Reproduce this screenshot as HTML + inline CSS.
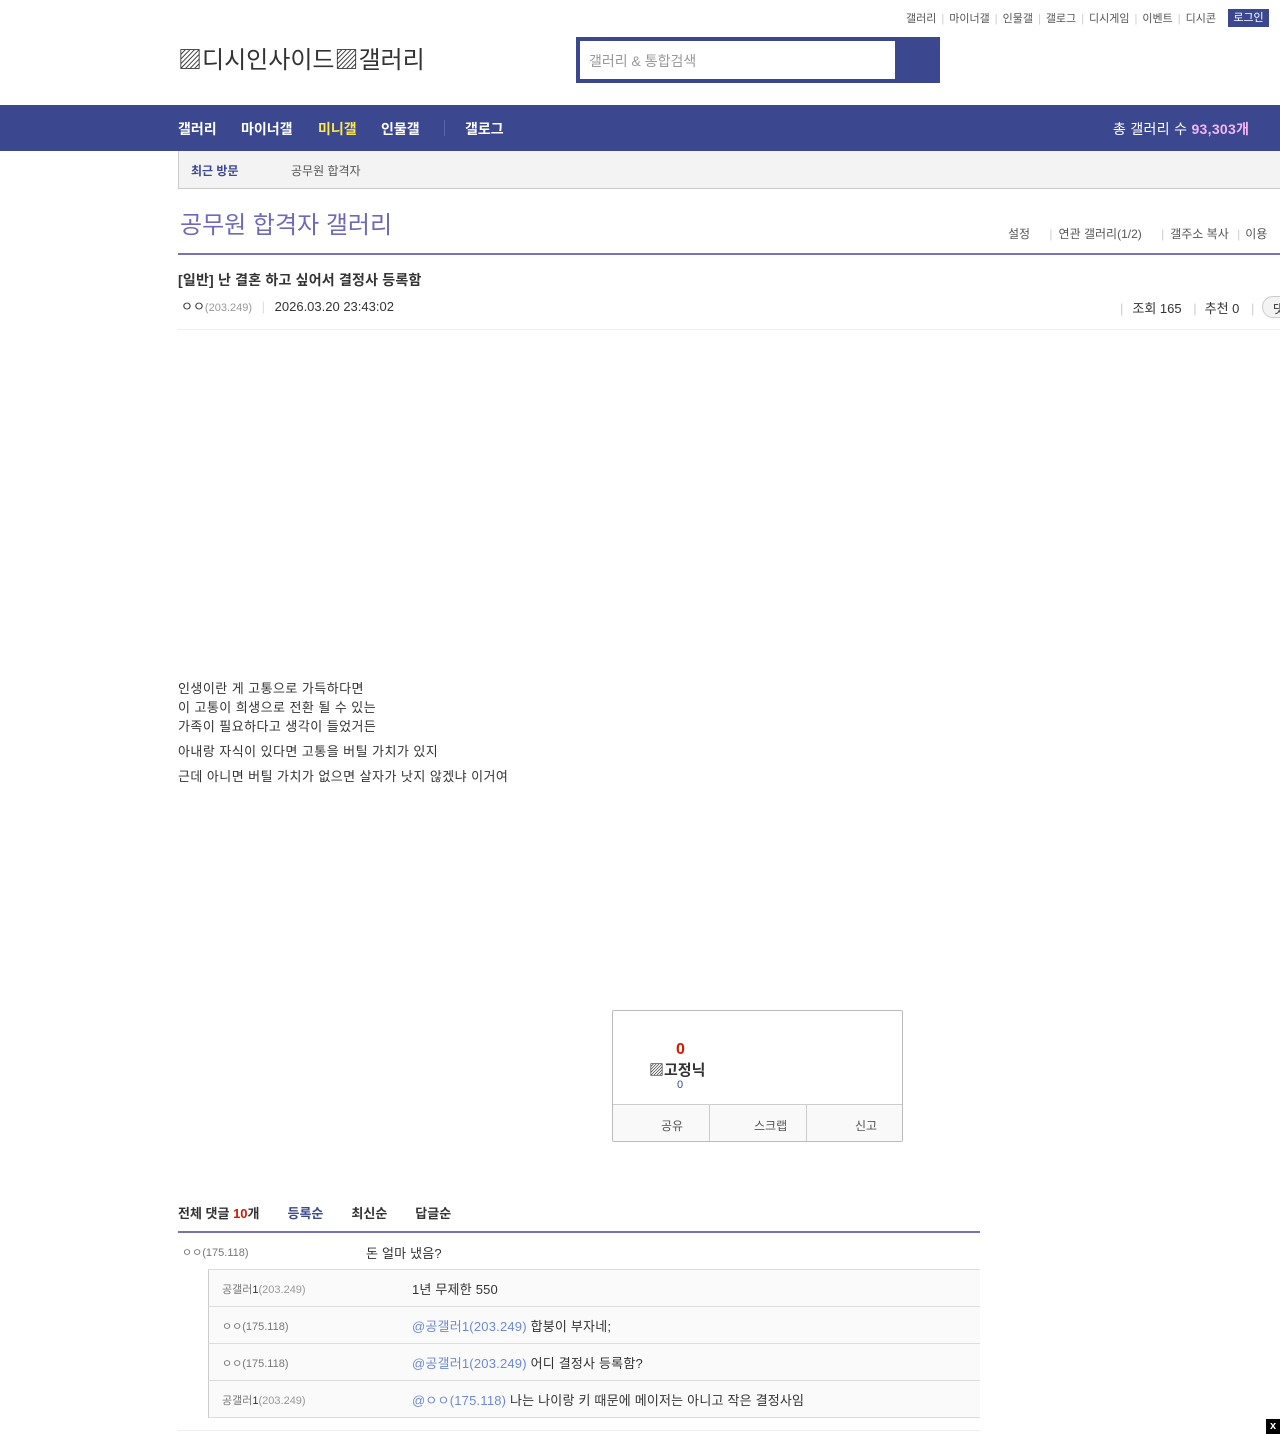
<!DOCTYPE html>
<html><head><meta charset="utf-8"><style>
*{margin:0;padding:0;box-sizing:border-box}
body{width:1280px;height:1434px;position:relative;overflow:hidden;background:#fff;font-family:"Liberation Sans","Noto Sans CJK KR",sans-serif;color:#333}
.a{position:absolute;white-space:nowrap}
.top{font-size:11px;color:#555;top:10px;right:64px}
.top span.s{color:#ccc;margin:0 5px}
.nav{top:105px;left:0;width:1280px;height:46px;background:#3b4890}
.nav .a{font-size:14px;font-weight:bold;color:#fff;top:14px}
.sub{top:151px;left:178px;width:1102px;height:38px;background:#f3f3f3;border-left:1px solid #ccc;border-bottom:1px solid #ccc}
.body{font-size:13px;color:#333;letter-spacing:0.45px}
.rbox{top:1010px;left:612px;width:291px;height:132px;border:1px solid #bbb;border-radius:2px}
.cm{left:208px;width:772px;height:37px;border-top:1px solid #ddd;background:#fafafa;border-left:1px solid #ccc}
.cm .n{position:absolute;left:13px;top:11px;font-size:11px;color:#777}
.cm .t{position:absolute;left:203px;top:9px;font-size:13px;color:#333;letter-spacing:0.2px}
.ip{color:#999;font-size:11px}
.at{color:#6e8ad6}
</style></head><body>
<div class="a top">갤러리<span class="s">|</span>마이너갤<span class="s">|</span>인물갤<span class="s">|</span>갤로그<span class="s">|</span>디시게임<span class="s">|</span>이벤트<span class="s">|</span>디시콘</div>
<div class="a" style="top:9px;left:1228px;width:41px;height:18px;background:#3b4890;color:#fff;font-size:11px;text-align:center;line-height:18px">로그인</div>
<div class="a" style="top:40px;left:178px;font-size:24px;color:#333">▨디시인사이드▨갤러리</div>
<div class="a" style="top:37px;left:576px;width:364px;height:46px;background:#3b4890"></div>
<div class="a" style="top:41px;left:580px;width:315px;height:38px;background:#fff;font-size:14px;color:#999;padding:10px 9px">갤러리 &amp; 통합검색</div>
<div class="a nav">
<span class="a" style="left:178px">갤러리</span><span class="a" style="left:241px">마이너갤</span><span class="a" style="left:318px;color:#ffe84a">미니갤</span><span class="a" style="left:381px">인물갤</span><span class="a" style="left:444px;top:15px;width:1px;height:16px;background:#5a67a5"></span><span class="a" style="left:465px">갤로그</span>
<span class="a" style="left:1113px;font-weight:normal;letter-spacing:0.3px">총 갤러리 수 <b style="color:#f6b5f2">93,303개</b></span></div>
<div class="a sub"><span class="a" style="left:12px;top:11px;font-size:12px;font-weight:bold;color:#3b4890">최근 방문</span><span class="a" style="left:112px;top:11px;font-size:12px;color:#555">공무원 합격자</span></div>
<div class="a" style="top:205px;left:180px;font-size:24px;color:#6e6ab8">공무원 합격자 갤러리</div>
<div class="a" style="top:225px;left:1008px;font-size:12px;color:#555">설정 <span style="color:#ccc;margin:0 6px 0 16px">|</span>연관 갤러리(1/2) <span style="color:#ccc;margin:0 6px 0 16px">|</span>갤주소 복사 <span style="color:#ccc;margin:0 5px">|</span>이용</div>
<div class="a" style="top:253px;left:178px;width:1102px;height:2px;background:#7873b5"></div>
<div class="a" style="top:270px;left:178px;font-size:14px;font-weight:bold;color:#333;letter-spacing:0.2px">[일반] 난 결혼 하고 싶어서 결정사 등록함</div>
<div class="a" style="top:296px;left:181px;font-size:13px;color:#333">ㅇㅇ<span class="ip">(203.249)</span> <span style="color:#ddd;margin:0 6px">|</span> 2026.03.20 23:43:02</div>
<div class="a" style="top:298px;left:1120px;font-size:13px;color:#333"><span style="color:#ccc;margin-right:9px">|</span>조회 165 <span style="color:#ccc;margin:0 8px">|</span>추천 0 <span style="color:#ccc;margin-left:8px">|</span></div>
<div class="a" style="top:296px;left:1262px;width:30px;height:22px;border:1px solid #ccc;border-radius:11px;background:#f3f3f3;font-size:12px;padding:3px 10px">댓</div>
<div class="a" style="top:329px;left:178px;width:1102px;height:1px;background:#eee"></div>
<div class="a body" style="top:679px;left:178px;line-height:19px">인생이란 게 고통으로 가득하다면<br>이 고통이 희생으로 전환 될 수 있는<br>가족이 필요하다고 생각이 들었거든</div>
<div class="a body" style="top:741px;left:178px">아내랑 자식이 있다면 고통을 버틸 가치가 있지</div>
<div class="a body" style="top:766px;left:178px">근데 아니면 버틸 가치가 없으면 살자가 낫지 않겠냐 이거여</div>
<div class="a rbox">
<div class="a" style="left:63px;top:30px;font-size:16px;font-weight:bold;color:#d31900">0</div>
<div class="a" style="left:36px;top:48px;font-size:15px;font-weight:bold;color:#333">▨고정닉</div>
<div class="a" style="left:64px;top:68px;font-size:11px;color:#3b4890">0</div>
<div class="a" style="left:0;top:93px;width:289px;height:37px;background:#f9f9f9;border-top:1px solid #ccc"></div>
<div class="a" style="left:96px;top:93px;width:1px;height:37px;background:#ccc"></div>
<div class="a" style="left:193px;top:93px;width:1px;height:37px;background:#ccc"></div>
<div class="a" style="left:48px;top:106px;font-size:12px;color:#555">공유</div>
<div class="a" style="left:141px;top:106px;font-size:12px;color:#555">스크랩</div>
<div class="a" style="left:242px;top:106px;font-size:12px;color:#555">신고</div>
</div>
<div class="a" style="top:1203px;left:178px;font-size:13px;font-weight:bold;color:#333">전체 댓글 <span style="color:#d31900">10</span>개<span style="color:#3b4890;margin-left:28px">등록순</span><span style="margin-left:28px">최신순</span><span style="margin-left:28px">답글순</span></div>
<div class="a" style="top:1231px;left:178px;width:802px;height:2px;background:#7873b5"></div>
<div class="a" style="top:1244px;left:182px;font-size:11px;color:#777">ㅇㅇ<span>(175.118)</span></div>
<div class="a body" style="top:1243px;left:366px;letter-spacing:0.2px">돈 얼마 냈음?</div>
<div class="a cm" style="top:1269px"><span class="n">공갤러<b style="color:#333;font-weight:normal">1</b><span class="ip">(203.249)</span></span><span class="t">1년 무제한 550</span></div>
<div class="a cm" style="top:1306px"><span class="n">ㅇㅇ(175.118)</span><span class="t"><span class="at">@공갤러1(203.249)</span> 합붕이 부자네;</span></div>
<div class="a cm" style="top:1343px"><span class="n">ㅇㅇ(175.118)</span><span class="t"><span class="at">@공갤러1(203.249)</span> 어디 결정사 등록함?</span></div>
<div class="a cm" style="top:1380px;border-bottom:1px solid #ddd;height:38px"><span class="n">공갤러<b style="color:#333;font-weight:normal">1</b><span class="ip">(203.249)</span></span><span class="t"><span class="at">@ㅇㅇ(175.118)</span> 나는 나이랑 키 때문에 메이저는 아니고 작은 결정사임</span></div>
<div class="a" style="top:1430px;left:178px;width:802px;height:1px;background:#eee"></div>
<div class="a" style="top:1419px;left:1266px;width:14px;height:15px;background:#000;color:#fff;font-size:11px;font-weight:bold;text-align:center;line-height:15px">x</div>
</body></html>
